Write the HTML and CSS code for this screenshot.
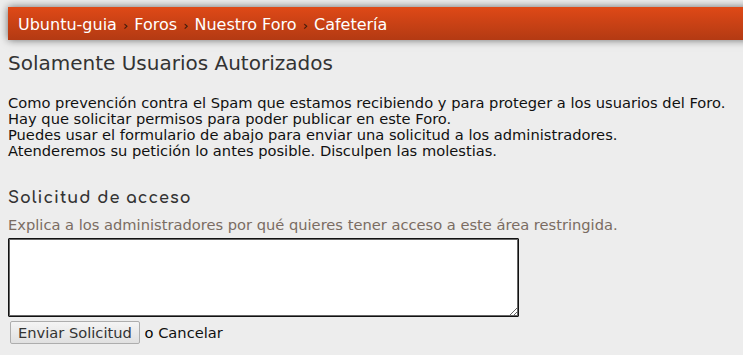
FILE: index.html
```html
<!DOCTYPE html>
<html lang="es">
<head>
    <meta charset="UTF-8">
    <title>Solamente Usuarios Autorizados</title>
    <link rel="stylesheet" href="styles.css">
</head>
<body>
    <div class="crumbs">
        <a href="#">Ubuntu-guia</a> <span class="sep">›</span>
        <a href="#">Foros</a> <span class="sep">›</span>
        <a href="#">Nuestro Foro</a> <span class="sep">›</span>
        <a href="#">Cafetería</a>
    </div>

    <h1>Solamente Usuarios Autorizados</h1>

    <p class="intro">
        Como prevención contra el Spam que estamos recibiendo y para proteger a los usuarios del Foro.<br>
        Hay que solicitar permisos para poder publicar en este Foro.<br>
        Puedes usar el formulario de abajo para enviar una solicitud a los administradores.<br>
        Atenderemos su petición lo antes posible. Disculpen las molestias.
    </p>

    <h2>Solicitud de acceso</h2>
    <form class="request">
        <label for="reason">Explica a los administradores por qué quieres tener acceso a este área restringida.</label>
        <textarea id="reason" autofocus></textarea>
        <div class="actions">
            <button type="submit">Enviar Solicitud</button> o <a href="#">Cancelar</a>
        </div>
    </form>
</body>
</html>
```

FILE: styles.css
```css
body { margin: 0; background-color: #ededed; color: #000; font-family: "DejaVu Sans", sans-serif; font-size: 14.67px; overflow: hidden; }
a { color: inherit; text-decoration: none; }

.crumbs { margin: 7px -20px 0 8px; height: 33px; padding-left: 10px; line-height: 35px; font-size: 16px; color: #fff; background: linear-gradient(#df4917, #b33a13); box-shadow: 0 0 8px rgba(0, 0, 0, 0.55); }
.crumbs .sep { font-size: 13px; color: #2e1408; padding: 0 1px; }

h1 { margin: 11px 8px 0; font-size: 20px; font-weight: normal; color: #333; }
.intro { margin: 20px 8px 0; line-height: 16px; color: #111; }

h2 { margin: 30px 8px 0; font-family: "Comfortaa", "Lato", sans-serif; font-size: 16px; font-weight: bold; letter-spacing: 1px; color: #333; }

.request { margin: 9px 8px 0; }
.request label { display: block; color: #7a6c62; line-height: 18px; }
.request textarea { display: block; box-sizing: border-box; width: 511px; height: 79px; margin-top: 4px; border: 1px solid #111; border-radius: 1px; outline: none; box-shadow: inset 0 0 0 1px #666; background: #fff; }
.actions { margin-top: 4px; }
.actions button { font-family: inherit; font-size: 14.67px; height: 23px; padding: 0 7px; margin-left: 2px; color: #333; background: linear-gradient(#f4f4f4, #e0e0e0); border: 1px solid #adadad; border-radius: 2px; }
.actions a { color: #111; }
```
